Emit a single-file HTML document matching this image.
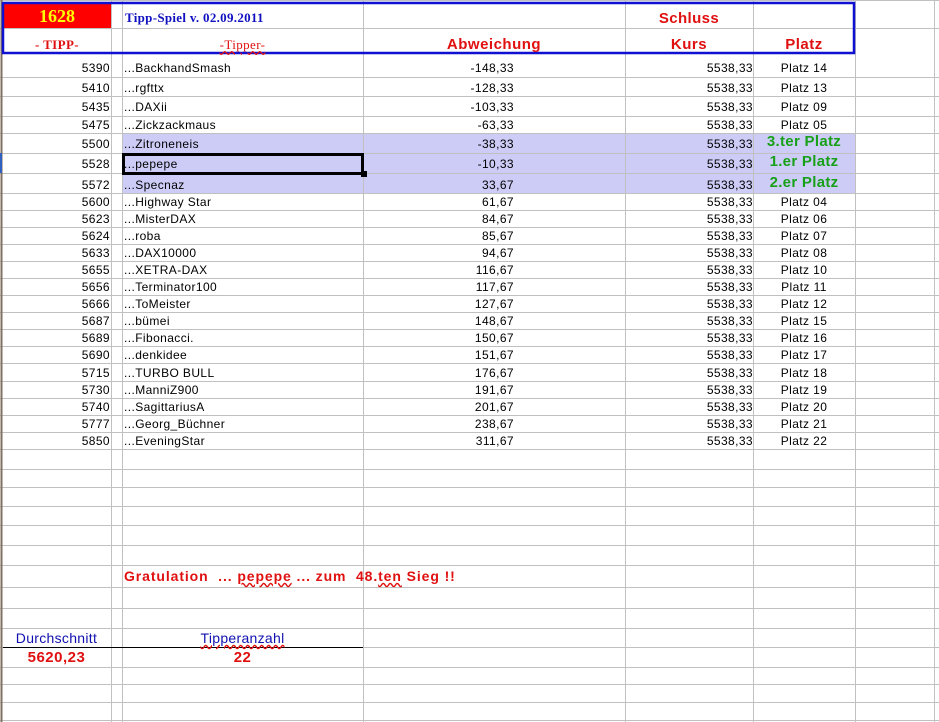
<!DOCTYPE html>
<html><head><meta charset="utf-8"><style>
body{margin:0;width:939px;height:722px;background:#fff;position:relative;overflow:hidden;font-family:"Liberation Sans",Arial,sans-serif;font-size:12px;letter-spacing:0.4px;}
.t{position:absolute;white-space:nowrap;line-height:14px;}
.r{text-align:right}
.c{text-align:center}
</style></head><body>
<svg width="939" height="722" style="position:absolute;left:0;top:0">
<rect x="122" y="133" width="733" height="60" fill="#ccccf7"/>
<rect x="3" y="3" width="108" height="25" fill="#ff0000"/>
<g stroke="#c0c0c0" stroke-width="1" shape-rendering="crispEdges">
<line x1="0" y1="0.5" x2="939" y2="0.5"/>
<line x1="111.5" y1="0" x2="111.5" y2="722"/>
<line x1="122.5" y1="0" x2="122.5" y2="722"/>
<line x1="363.5" y1="0" x2="363.5" y2="722"/>
<line x1="625.5" y1="0" x2="625.5" y2="722"/>
<line x1="753.5" y1="0" x2="753.5" y2="722"/>
<line x1="855.5" y1="0" x2="855.5" y2="722"/>
<line x1="934.5" y1="0" x2="934.5" y2="722"/>
<line x1="0" y1="28.5" x2="939" y2="28.5"/>
<line x1="0" y1="77.5" x2="939" y2="77.5"/>
<line x1="0" y1="96.5" x2="939" y2="96.5"/>
<line x1="0" y1="116.5" x2="939" y2="116.5"/>
<line x1="0" y1="133.5" x2="939" y2="133.5"/>
<line x1="0" y1="153.5" x2="939" y2="153.5"/>
<line x1="0" y1="173.5" x2="939" y2="173.5"/>
<line x1="0" y1="193.5" x2="939" y2="193.5"/>
<line x1="0" y1="210.5" x2="939" y2="210.5"/>
<line x1="0" y1="227.5" x2="939" y2="227.5"/>
<line x1="0" y1="244.5" x2="939" y2="244.5"/>
<line x1="0" y1="261.5" x2="939" y2="261.5"/>
<line x1="0" y1="278.5" x2="939" y2="278.5"/>
<line x1="0" y1="295.5" x2="939" y2="295.5"/>
<line x1="0" y1="312.5" x2="939" y2="312.5"/>
<line x1="0" y1="329.5" x2="939" y2="329.5"/>
<line x1="0" y1="346.5" x2="939" y2="346.5"/>
<line x1="0" y1="363.5" x2="939" y2="363.5"/>
<line x1="0" y1="381.5" x2="939" y2="381.5"/>
<line x1="0" y1="398.5" x2="939" y2="398.5"/>
<line x1="0" y1="415.5" x2="939" y2="415.5"/>
<line x1="0" y1="432.5" x2="939" y2="432.5"/>
<line x1="0" y1="449.5" x2="939" y2="449.5"/>
<line x1="0" y1="469.5" x2="939" y2="469.5"/>
<line x1="0" y1="487.5" x2="939" y2="487.5"/>
<line x1="0" y1="506.5" x2="939" y2="506.5"/>
<line x1="0" y1="525.5" x2="939" y2="525.5"/>
<line x1="0" y1="545.5" x2="939" y2="545.5"/>
<line x1="0" y1="565.5" x2="939" y2="565.5"/>
<line x1="0" y1="587.5" x2="939" y2="587.5"/>
<line x1="0" y1="608.5" x2="939" y2="608.5"/>
<line x1="0" y1="628.5" x2="939" y2="628.5"/>
<line x1="0" y1="647.5" x2="939" y2="647.5"/>
<line x1="0" y1="667.5" x2="939" y2="667.5"/>
<line x1="0" y1="684.5" x2="939" y2="684.5"/>
<line x1="0" y1="702.5" x2="939" y2="702.5"/>
<line x1="0" y1="720.5" x2="939" y2="720.5"/>
</g>
<line x1="1.5" y1="0" x2="1.5" y2="722" stroke="#807060" stroke-width="2"/>
<rect x="0" y="153" width="2" height="20" fill="#3060c0"/>
<rect x="3" y="3" width="851" height="50" fill="none" stroke="#1010d0" stroke-width="2.5"/>
<line x1="3" y1="647.5" x2="363" y2="647.5" stroke="#000" stroke-width="1"/>
<rect x="123.5" y="154.5" width="239" height="19" fill="none" stroke="#000" stroke-width="3"/>
<rect x="361" y="171" width="6" height="6" fill="#000"/>
</svg>

<div class="t c" style="left:3px;top:6px;width:108px;font:bold 18px 'Liberation Serif',serif;color:#ffff00;line-height:20px;letter-spacing:0">1628</div>
<div class="t" style="left:125px;top:10px;font:bold 13px 'Liberation Serif',serif;color:#1010c0;letter-spacing:0.3px">Tipp-Spiel v. 02.09.2011</div>
<div class="t c" style="left:625px;top:10px;width:128px;font:bold 15px 'Liberation Sans',sans-serif;color:#e01010">Schluss</div>
<div class="t c" style="left:3px;top:37px;width:108px;font:bold 13px 'Liberation Serif',serif;color:#e01010">- TIPP-</div>
<div class="t c" style="left:122px;top:37px;width:241px;font:13px 'Liberation Serif',serif;color:#e01010;text-decoration:underline wavy #e01010">-Tipper-</div>
<div class="t c" style="left:363px;top:36px;width:262px;font:bold 15px 'Liberation Sans',sans-serif;color:#e01010;letter-spacing:0.5px">Abweichung</div>
<div class="t c" style="left:625px;top:36px;width:128px;font:bold 15px 'Liberation Sans',sans-serif;color:#e01010;letter-spacing:0.5px">Kurs</div>
<div class="t c" style="left:753px;top:36px;width:102px;font:bold 15px 'Liberation Sans',sans-serif;color:#e01010;letter-spacing:0.5px">Platz</div>

<div id="rows"></div>
<script>
var d=[[61,5390,"BackhandSmash","-148,33","Platz 14"],[81,5410,"rgfttx","-128,33","Platz 13"],[100,5435,"DAXii","-103,33","Platz 09"],[118,5475,"Zickzackmaus","-63,33","Platz 05"],[137,5500,"Zitroneneis","-38,33","3.ter Platz"],[157,5528,"pepepe","-10,33","1.er Platz"],[178,5572,"Specnaz","33,67","2.er Platz"],[195,5600,"Highway Star","61,67","Platz 04"],[212,5623,"MisterDAX","84,67","Platz 06"],[229,5624,"roba","85,67","Platz 07"],[246,5633,"DAX10000","94,67","Platz 08"],[263,5655,"XETRA-DAX","116,67","Platz 10"],[280,5656,"Terminator100","117,67","Platz 11"],[297,5666,"ToMeister","127,67","Platz 12"],[314,5687,"bümei","148,67","Platz 15"],[331,5689,"Fibonacci.","150,67","Platz 16"],[348,5690,"denkidee","151,67","Platz 17"],[366,5715,"TURBO BULL","176,67","Platz 18"],[383,5730,"ManniZ900","191,67","Platz 19"],[400,5740,"SagittariusA","201,67","Platz 20"],[417,5777,"Georg_Büchner","238,67","Platz 21"],[434,5850,"EveningStar","311,67","Platz 22"]];
var h="";
d.forEach(function(r){var y=r[0];var g=r[4][0]!="P";
h+='<div class="t r" style="left:0;width:110px;top:'+y+'px">'+r[1]+'</div>';
h+='<div class="t" style="left:124px;top:'+y+'px">...'+r[2]+'</div>';
h+='<div class="t r" style="left:400px;width:114px;top:'+y+'px">'+r[3]+'</div>';
h+='<div class="t r" style="left:640px;width:113px;top:'+y+'px">5538,33</div>';
h+='<div class="t c" style="left:753px;width:102px;top:'+(g?y-2:y)+'px;'+(g?'font-weight:bold;font-size:15px;letter-spacing:0.3px;color:#18a018':'')+'">'+r[4]+'</div>';});
document.getElementById("rows").innerHTML=h;
</script>

<div class="t" style="left:124px;top:569px;font-weight:bold;font-size:14px;letter-spacing:0.9px;color:#e01010">Gratulation &nbsp;... <span style="text-decoration:underline wavy #e01010">pepepe</span> ... zum &nbsp;48.<span style="text-decoration:underline wavy #e01010">ten</span> Sieg !!</div>
<div class="t c" style="left:0;width:113px;top:631px;font-size:14px;letter-spacing:0.3px;color:#1010b0">Durchschnitt</div>
<div class="t c" style="left:122px;width:241px;top:631px;font-size:14px;letter-spacing:0.3px;color:#1010b0;text-decoration:underline wavy #e01010">Tipperanzahl</div>
<div class="t c" style="left:0;width:113px;top:651px;font-weight:bold;font-size:15px;letter-spacing:0.5px;color:#e01010">5620,23</div>
<div class="t c" style="left:122px;width:241px;top:651px;font-weight:bold;font-size:15px;color:#e01010">22</div>
</body></html>
